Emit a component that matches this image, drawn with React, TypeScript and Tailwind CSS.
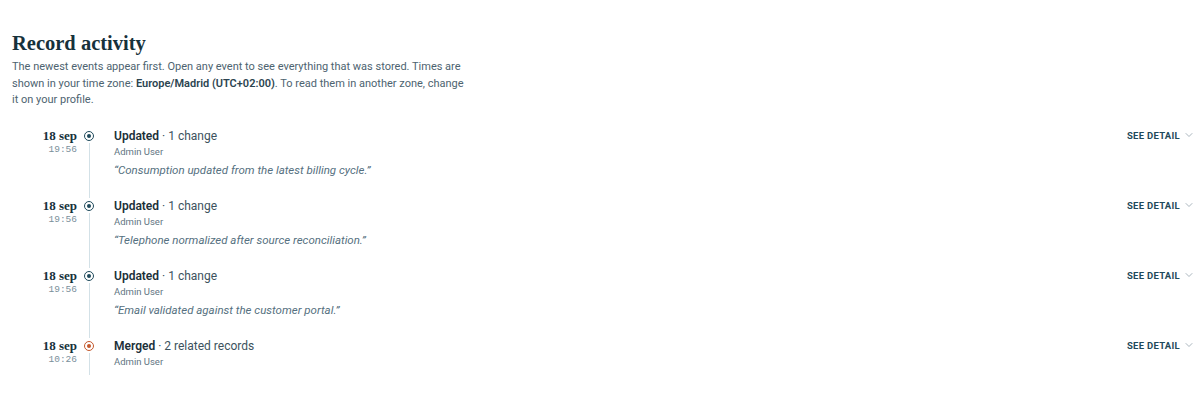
import { ChevronDown } from "lucide-react";

type Event = {
  id: number;
  date: string;
  time: string;
  action: string;
  detail: string;
  author: string;
  note?: string;
  tone: "teal" | "orange";
};

const events: Event[] = [
  {
    id: 1,
    date: "18 sep",
    time: "19:56",
    action: "Updated",
    detail: "1 change",
    author: "Admin User",
    note: "Consumption updated from the latest billing cycle.",
    tone: "teal",
  },
  {
    id: 2,
    date: "18 sep",
    time: "19:56",
    action: "Updated",
    detail: "1 change",
    author: "Admin User",
    note: "Telephone normalized after source reconciliation.",
    tone: "teal",
  },
  {
    id: 3,
    date: "18 sep",
    time: "19:56",
    action: "Updated",
    detail: "1 change",
    author: "Admin User",
    note: "Email validated against the customer portal.",
    tone: "teal",
  },
  {
    id: 4,
    date: "18 sep",
    time: "10:26",
    action: "Merged",
    detail: "2 related records",
    author: "Admin User",
    tone: "orange",
  },
];

export default function App() {
  return (
    <div className="min-h-screen bg-white pl-3 pr-[5px] pt-[28px] font-['Roboto',sans-serif] text-[#1c3039]">

      <h1 className="font-['Liberation_Serif',serif] text-[20.5px] font-bold leading-[30px] text-[#16313b]">
        Record activity
      </h1>

      <p className="mt-px max-w-[455px] text-[11px] leading-[16.5px] text-[#4d6370]">
        The newest events appear first. Open any event to see everything that was stored. Times are
        shown in your time zone:{" "}
        <span className="font-semibold text-[#2b4450]">Europe/Madrid (UTC+02:00)</span>. To read
        them in another zone, change it on your profile.
      </p>

      <ul className="mt-[19px]">
        {events.map((item) => (
          <li key={item.id} className="flex">

            <div className="w-[65px] shrink-0 text-right">
              <div className="font-['Liberation_Serif',serif] text-[13px] font-bold leading-[16px] text-[#16313b]">
                {item.date}
              </div>
              <div className="font-['Liberation_Mono',monospace] text-[9.5px] leading-[12px] text-[#7a8f9b]">
                {item.time}
              </div>
            </div>

            <div className="ml-px flex w-[22px] shrink-0 flex-col items-center pt-[3px]">
              <span
                className={
                  item.tone === "orange"
                    ? "flex h-[10px] w-[10px] items-center justify-center rounded-full border-[1.5px] border-[#c4582c]"
                    : "flex h-[10px] w-[10px] items-center justify-center rounded-full border-[1.5px] border-[#1f4a5b]"
                }
              >
                <span
                  className={
                    item.tone === "orange"
                      ? "h-[4px] w-[4px] rounded-full bg-[#c4582c]"
                      : "h-[4px] w-[4px] rounded-full bg-[#1f4a5b]"
                  }
                />
              </span>
              <span className="mt-[2px] w-px flex-1 bg-[#d3e1e7]" />
            </div>

            <div className="ml-[14px] flex-1 pb-[6px]">
              <div className="text-[12px] leading-[16px] text-[#1c3039]">
                <span className="font-semibold">{item.action}</span>
                <span className="text-[#3c525d]"> · {item.detail}</span>
              </div>
              <div className="text-[9.5px] leading-[15px] text-[#5f7582]">
                {item.author}
              </div>
              {item.note && (
                <div className="mb-[14px] mt-[3px] text-[11.5px] italic leading-[16px] text-[#557080]">
                  “{item.note}”
                </div>
              )}
            </div>

            <button className="flex h-[14px] items-start gap-[3px] pt-px text-[9.5px] font-bold uppercase tracking-[0.03em] text-[#1f4a5b]">
              See detail
              <ChevronDown size={12} strokeWidth={1.5} className="text-[#8d9ea8]" />
            </button>

          </li>
        ))}
      </ul>

    </div>
  );
}
